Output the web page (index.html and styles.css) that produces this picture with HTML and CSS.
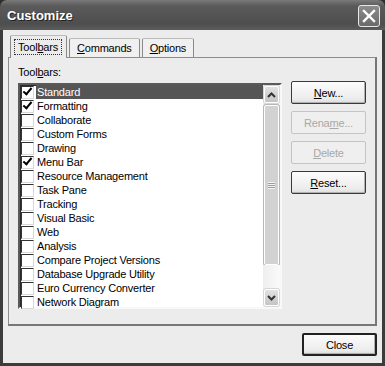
FILE: index.html
```html
<!DOCTYPE html>
<html lang="en">
<head>
    <meta charset="UTF-8">
    <title>Customize</title>
    <link rel="stylesheet" href="styles.css">
</head>
<body>
    <div class="window">
        <!-- Title bar -->
        <div class="titlebar">
            <span class="title">Customize</span>
            <span class="close-x">
                <svg width="14" height="14" viewBox="0 0 14 14"><path d="M2 2 L12 12 M12 2 L2 12" stroke="#fff" stroke-width="2.4" stroke-linecap="square"/></svg>
            </span>
        </div>

        <div class="frame">
            <!-- Tabs -->
            <div class="tabs">
                <div class="tab active"><span class="focus">Tool<u>b</u>ars</span></div>
                <div class="tab"><u>C</u>ommands</div>
                <div class="tab"><u>O</u>ptions</div>
            </div>

            <div class="panel">
                <div class="label">Tool<u>b</u>ars:</div>
                <div class="panel-row">
                    <div class="listbox">
                        <div class="items">
                            <div class="item selected"><span class="check on"></span><span class="name">Standard</span></div>
                            <div class="item"><span class="check on"></span><span class="name">Formatting</span></div>
                            <div class="item"><span class="check"></span><span class="name">Collaborate</span></div>
                            <div class="item"><span class="check"></span><span class="name">Custom Forms</span></div>
                            <div class="item"><span class="check"></span><span class="name">Drawing</span></div>
                            <div class="item"><span class="check on"></span><span class="name">Menu Bar</span></div>
                            <div class="item"><span class="check"></span><span class="name">Resource Management</span></div>
                            <div class="item"><span class="check"></span><span class="name">Task Pane</span></div>
                            <div class="item"><span class="check"></span><span class="name">Tracking</span></div>
                            <div class="item"><span class="check"></span><span class="name">Visual Basic</span></div>
                            <div class="item"><span class="check"></span><span class="name">Web</span></div>
                            <div class="item"><span class="check"></span><span class="name">Analysis</span></div>
                            <div class="item"><span class="check"></span><span class="name">Compare Project Versions</span></div>
                            <div class="item"><span class="check"></span><span class="name">Database Upgrade Utility</span></div>
                            <div class="item"><span class="check"></span><span class="name">Euro Currency Converter</span></div>
                            <div class="item"><span class="check"></span><span class="name">Network Diagram</span></div>
                        </div>
                        <!-- Scrollbar -->
                        <div class="scrollbar">
                            <div class="sb-btn">
                                <svg width="9" height="6" viewBox="0 0 9 6"><path d="M1 5 L4.5 1.5 L8 5" fill="none" stroke="#333" stroke-width="2"/></svg>
                            </div>
                            <div class="sb-thumb"><span class="grip"></span></div>
                            <div class="sb-track"></div>
                            <div class="sb-btn">
                                <svg width="9" height="6" viewBox="0 0 9 6"><path d="M1 1 L4.5 4.5 L8 1" fill="none" stroke="#333" stroke-width="2"/></svg>
                            </div>
                        </div>
                    </div>

                    <div class="side-buttons">
                        <button class="btn"><u>N</u>ew...</button>
                        <button class="btn" disabled>Rena<u>m</u>e...</button>
                        <button class="btn" disabled><u>D</u>elete</button>
                        <button class="btn"><u>R</u>eset...</button>
                    </div>
                </div>
            </div>

            <div class="footer">
                <button class="btn default">Close</button>
            </div>
        </div>
    </div>
</body>
</html>
```

FILE: styles.css
```css
body { margin: 0; background: #2e2e2e; font-family: "Liberation Sans", Arial, sans-serif; font-size: 11px; color: #000; }
u { text-decoration: underline; text-underline-offset: 1px; }

.window { width: 385px; height: 366px; display: flex; flex-direction: column; overflow: hidden; }

.titlebar { height: 30px; flex: none; display: flex; align-items: center; justify-content: space-between; padding: 0 5px 0 7px; box-sizing: border-box; background: linear-gradient(#7a7a7a, #5a5a5a 20%, #4e4e4e 80%, #5c5c5c); border-radius: 7px 7px 0 0; }
.title { color: #fff; font-weight: bold; font-size: 13px; text-shadow: 1px 1px 0 #222; }
.close-x { width: 20px; height: 20px; margin-top: 1px; border: 1px solid #e8e8e8; border-radius: 3px; background: linear-gradient(#8c8c8c, #6a6a6a); display: flex; align-items: center; justify-content: center; }

.frame { flex: 1; background: #ececec; border: 3px solid #3c3c3c; border-top: none; display: flex; flex-direction: column; padding: 5px 5px 0 5px; letter-spacing: -0.2px; }

.tabs { display: flex; align-items: flex-end; height: 22px; padding-left: 2px; position: relative; z-index: 1; }
.tab { height: 19px; box-sizing: border-box; padding: 3px 7px 0 7px; margin-right: 2px; background: #f0f0f0; border: 1px solid #8a8a8a; border-bottom: none; border-top-color: #bbb; border-radius: 2px 2px 0 0; }
.tab.active { padding: 3px 4px 0 3px; background: #ececec; margin-bottom: -1px; height: 23px; }
.focus { display: inline-block; padding: 1px 3px; border: 1px dotted #333; }

.panel { height: 269px; box-sizing: border-box; border: 1px solid #8c8c8c; border-right: 2px solid #777; border-bottom: 2px solid #777; padding: 7px 9px 0 9px; }
.label { height: 18px; line-height: 14px; }
.panel-row { display: flex; align-items: flex-start; }

.listbox { width: 265px; height: 226px; box-sizing: border-box; display: flex; background: #fff; border: 2px solid; border-color: #5a5a5a #f8f8f8 #f8f8f8 #5a5a5a; box-shadow: inset 1px 1px 0 #2a2a2a; }
.items { flex: 1; padding-left: 1px; }
.item { height: 14px; display: flex; align-items: center; }
.check { width: 11px; height: 11px; flex: none; margin-right: 2px; background: #fff; border: 1px solid; border-color: #333 #d8d8d8 #d8d8d8 #333; display: flex; align-items: center; justify-content: center; }
.check.on::after { content: ""; width: 7px; height: 3px; margin-top: -3px; border-left: 2px solid #000; border-bottom: 2px solid #000; transform: rotate(-50deg); }
.name { flex: 1; height: 14px; line-height: 14px; padding-left: 1px; }
.item.selected .name { background: #555; color: #fff; }

.scrollbar { width: 17px; flex: none; display: flex; flex-direction: column; background: #f6f6f6; padding: 1px 0; box-sizing: border-box; }
.sb-btn { height: 15px; margin: 0 1px; flex: none; border: 1px solid #fff; border-radius: 2px; background: linear-gradient(#e2e2e2, #c4c4c4); display: flex; align-items: center; justify-content: center; box-shadow: 0 0 0 1px #d6d6d6; }
.sb-thumb { height: 158px; margin: 2px 1px 0 1px; border: 1px solid #fff; border-radius: 2px; background: #d2d2d2; box-shadow: 0 0 0 1px #b8b8b8; display: flex; align-items: center; justify-content: center; }
.grip { width: 7px; height: 7px; background: repeating-linear-gradient(#f4f4f4 0 1px, #9c9c9c 1px 2px); }
.sb-track { flex: 1; background: linear-gradient(90deg, #eee, #fafafa); }

.side-buttons { display: flex; flex-direction: column; gap: 7px; margin-left: 9px; margin-top: -2px; }
.btn { width: 75px; height: 23px; padding: 0; font-family: inherit; font-size: 11px; letter-spacing: -0.2px; color: #000; background: linear-gradient(#fcfcfc, #ececec 80%, #dcdcdc); border: 1px solid #3a3a3a; border-radius: 2px; box-shadow: inset -1px -1px 0 #b0b0b0; }
.btn:disabled { color: #a8a8a8; border-color: #c4c4c4; box-shadow: none; background: #efefef; }

.footer { flex: 1; display: flex; justify-content: flex-end; align-items: flex-start; padding: 7px 0 0 0; }
.btn.default { border: 2px solid #222; }
```
